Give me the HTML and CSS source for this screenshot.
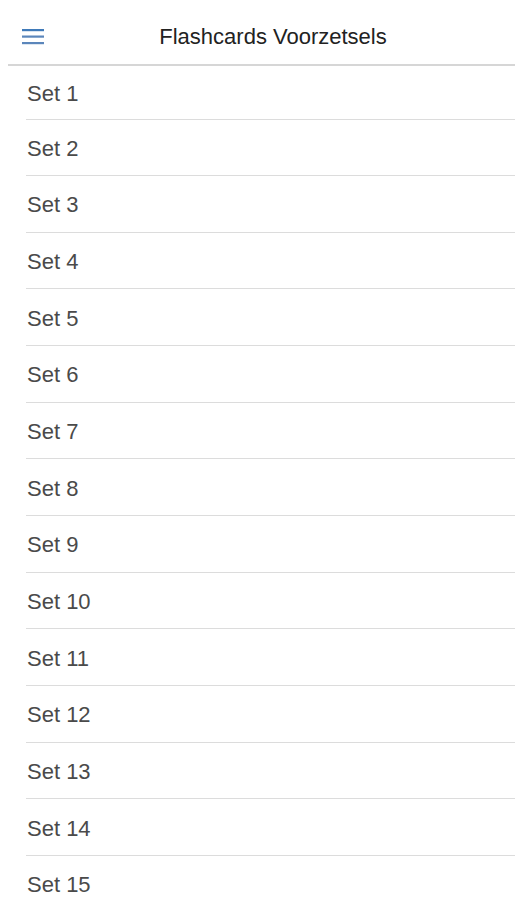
FILE: index.html
```html
<!DOCTYPE html>
<html lang="nl">
<head>
<meta charset="utf-8">
<title>Flashcards Voorzetsels</title>
<link rel="stylesheet" href="styles.css">
</head>
<body>
<header class="toolbar">
  <button class="menu-btn" aria-label="Menu">
    <svg width="22" height="16" viewBox="0 0 22 16" aria-hidden="true">
      <rect x="0" y="0" width="22" height="2.2" fill="#3f7ab9"/>
      <rect x="0" y="6.5" width="22" height="2.2" fill="#5b86bb"/>
      <rect x="0" y="13" width="22" height="2.2" fill="#5b86bb"/>
    </svg>
  </button>
  <h1 class="title">Flashcards Voorzetsels</h1>
</header>
<ul class="set-list">
  <li class="set-item">Set 1</li>
  <li class="set-item">Set 2</li>
  <li class="set-item">Set 3</li>
  <li class="set-item">Set 4</li>
  <li class="set-item">Set 5</li>
  <li class="set-item">Set 6</li>
  <li class="set-item">Set 7</li>
  <li class="set-item">Set 8</li>
  <li class="set-item">Set 9</li>
  <li class="set-item">Set 10</li>
  <li class="set-item">Set 11</li>
  <li class="set-item">Set 12</li>
  <li class="set-item">Set 13</li>
  <li class="set-item">Set 14</li>
  <li class="set-item">Set 15</li>
</ul>
</body>
</html>
```
FILE: styles.css
```css
html, body {
  margin: 0;
  padding: 0;
  background: #ffffff;
}

body {
  font-family: "Liberation Sans", Arial, sans-serif;
  overflow: hidden;
}

.toolbar {
  display: flex;
  align-items: center;
  height: 64px;
  margin-left: 8px;
  border-bottom: 2px solid #d6d6d6;
}

.menu-btn {
  display: flex;
  align-items: center;
  justify-content: center;
  border: 0;
  background: transparent;
  padding: 0;
  margin-left: 14px;
  margin-top: 10px;
  width: 22px;
  height: 26px;
}

.title {
  flex: 1;
  margin: 0;
  padding-right: 13px;
  padding-top: 10px;
  text-align: center;
  font-size: 22px;
  font-weight: normal;
  color: #222222;
}

.set-list {
  list-style: none;
  margin: 0;
  padding: 0;
}

.set-item {
  display: flex;
  align-items: center;
  box-sizing: border-box;
  height: 56.65px;
  margin-left: 26px;
  padding-left: 1px;
  padding-top: 3px;
  border-bottom: 1px solid #dcdcdc;
  font-size: 22px;
  color: #4a4a4a;
}

.set-item:first-child {
  height: 53.5px;
}
```
